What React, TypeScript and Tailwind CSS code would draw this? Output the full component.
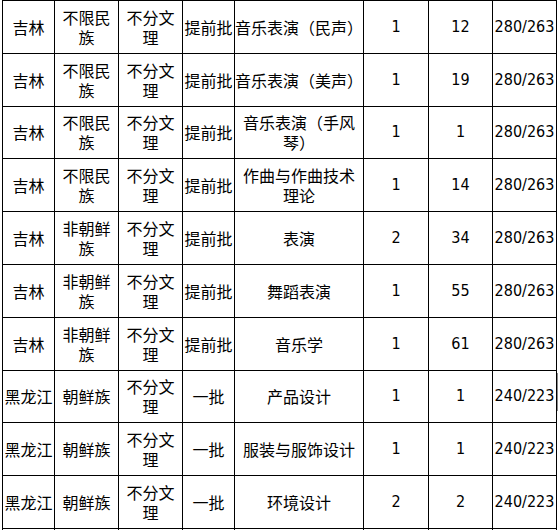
import React from "react";

type Row = string[];

// "/" inside a text cell marks a line break
const rows: Row[] = [
  ["吉林", "不限民/族", "不分文/理", "提前批", "音乐表演（民声）", "1", "12", "280∕263"],
  ["吉林", "不限民/族", "不分文/理", "提前批", "音乐表演（美声）", "1", "19", "280∕263"],
  ["吉林", "不限民/族", "不分文/理", "提前批", "音乐表演（手风/琴）", "1", "1", "280∕263"],
  ["吉林", "不限民/族", "不分文/理", "提前批", "作曲与作曲技术/理论", "1", "14", "280∕263"],
  ["吉林", "非朝鲜/族", "不分文/理", "提前批", "表演", "2", "34", "280∕263"],
  ["吉林", "非朝鲜/族", "不分文/理", "提前批", "舞蹈表演", "1", "55", "280∕263"],
  ["吉林", "非朝鲜/族", "不分文/理", "提前批", "音乐学", "1", "61", "280∕263"],
  ["黑龙江", "朝鲜族", "不分文/理", "一批", "产品设计", "1", "1", "240∕223"],
  ["黑龙江", "朝鲜族", "不分文/理", "一批", "服装与服饰设计", "1", "1", "240∕223"],
  ["黑龙江", "朝鲜族", "不分文/理", "一批", "环境设计", "2", "2", "240∕223"],
  // next row starts at the bottom edge, only its borders show
  ["", "", "", "", "", "", "", ""],
];

const widths = ["w-[52px]", "w-[64px]", "w-[64px]", "w-[52px]", "w-[129px]", "w-[65px]", "w-[64px]", "w-[64px]"];

const cjk = "font-['Noto_Sans_CJK_SC',sans-serif]";
const num = "font-['DejaVu_Sans_Condensed','Liberation_Sans',sans-serif]";

function Cell({ text, i }: { text: string; i: number }) {
  const isNum = i >= 5;
  const lines = text === "" ? [] : isNum ? [text.replace("∕", "/")] : text.split("/");
  return (
    <td className={`border border-black p-0 text-center align-middle whitespace-nowrap ${isNum ? num : cjk}`}>
      {lines.map((l, k) => (
        <div key={k} className="leading-[20px]">
          {l}
        </div>
      ))}
    </td>
  );
}

export default function App() {
  return (
    <div className="relative h-[530px] w-[559px] overflow-hidden bg-white text-[16px] text-black">
      <table className="ml-[2px] table-fixed border-collapse">
        <colgroup>
          {widths.map((w, i) => (
            <col key={i} className={w} />
          ))}
        </colgroup>
        <tbody>
          {rows.map((r, ri) => (
            <tr key={ri} className="h-[52.8px]">
              {r.map((c, ci) => (
                <Cell key={ci} text={c} i={ci} />
              ))}
            </tr>
          ))}
        </tbody>
      </table>
      {/* stray selection mark at the right edge */}
      <div className="absolute left-[557px] top-[373px] h-[38px] w-px bg-[#8a8a8a]" />
    </div>
  );
}
